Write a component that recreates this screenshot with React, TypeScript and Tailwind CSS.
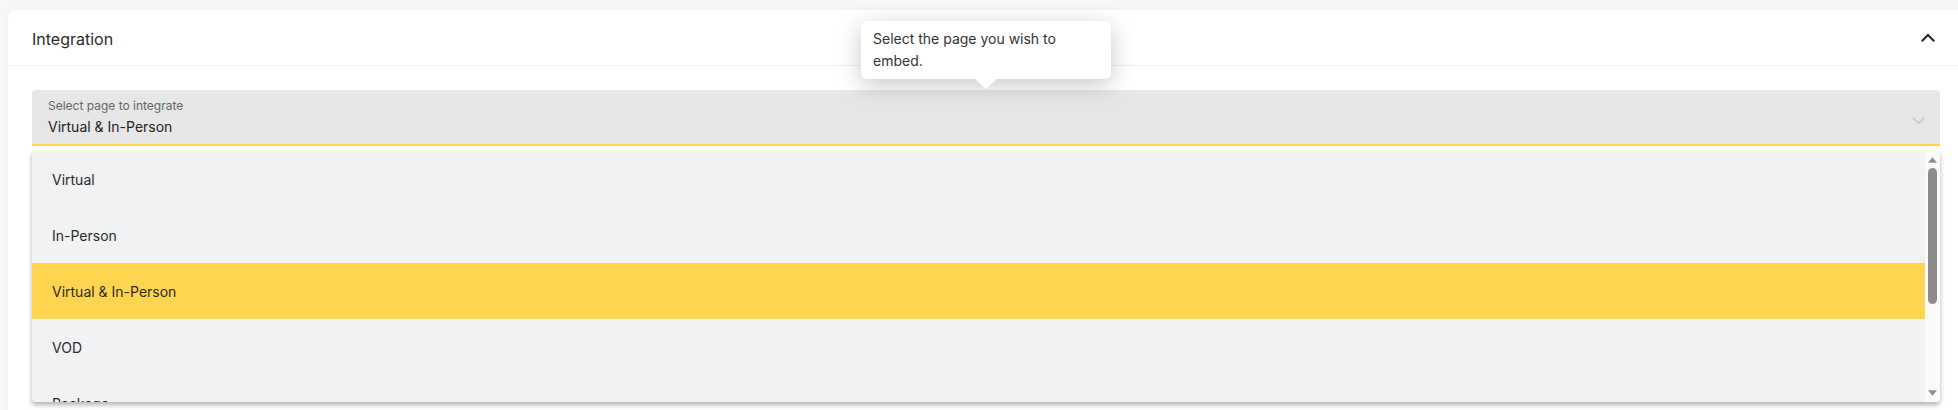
import React from 'react';

const options = ['Virtual', 'In-Person', 'Virtual & In-Person', 'VOD', 'Package'];
const selected = 'Virtual & In-Person';

const ChevronUp: React.FC<{ className?: string }> = ({ className }) => (
  <svg viewBox="0 0 16 16" fill="none" className={className} xmlns="http://www.w3.org/2000/svg">
    <path d="M2.5 10.5L8 5L13.5 10.5" stroke="currentColor" strokeWidth="2" strokeLinecap="square" />
  </svg>
);

const ChevronDown: React.FC<{ className?: string }> = ({ className }) => (
  <svg viewBox="0 0 16 16" fill="none" className={className} xmlns="http://www.w3.org/2000/svg">
    <path d="M2.5 5.5L8 11L13.5 5.5" stroke="currentColor" strokeWidth="2" strokeLinecap="round" strokeLinejoin="round" />
  </svg>
);

const Scrollbar: React.FC = () => (
  <div className="w-[15px] shrink-0 bg-[#fafafa] flex flex-col items-center">
    <svg viewBox="0 0 10 6" className="w-[9px] h-[6px] mt-[6px]" xmlns="http://www.w3.org/2000/svg">
      <path d="M5 0L10 6H0Z" fill="#8f8f8f" />
    </svg>
    <div className="w-[9px] h-[136px] mt-[5px] rounded-full bg-[#8c8c8c]" />
    <div className="flex-1" />
    <svg viewBox="0 0 10 6" className="w-[9px] h-[6px] mb-[6px]" xmlns="http://www.w3.org/2000/svg">
      <path d="M0 0H10L5 6Z" fill="#8f8f8f" />
    </svg>
  </div>
);

export default function App() {
  return (
    <div
      className="w-[1958px] h-[410px] overflow-hidden bg-[#f7f7f7] pl-2 pt-[10px] relative"
      style={{ fontFamily: 'Inter, "Noto Sans", sans-serif' }}
    >
      <div className="w-[1956px] h-[420px] bg-white rounded-lg shadow-[0_0_6px_rgba(0,0,0,0.04)]">
        {/* header */}
        <div className="h-[56px] flex items-center justify-between px-6 border-b border-[#f0f0f0]">
          <span className="text-[16px] text-[#2b2b2b] mt-[2px]">Integration</span>
          <ChevronUp className="w-4 h-4 text-[#222] mr-[4px]" />
        </div>

        {/* body */}
        <div className="px-6 pt-6 relative">
          <div className="h-[56px] bg-[#e7e7e7] rounded-t border-b-2 border-[#ffd54f] flex items-center justify-between pl-4 pr-[14px]">
            <div className="flex flex-col">
              <span className="text-[12px] leading-[16px] text-[#666]">Select page to integrate</span>
              <span className="text-[14px] leading-[20px] text-[#222] mt-[3px]">{selected}</span>
            </div>
            <ChevronDown className="w-[15px] h-[15px] text-[#c6cad2] mt-[6px]" />
          </div>

          {/* dropdown list */}
          <div className="mt-[5px] h-[251px] bg-[#f1f2f4] rounded-b shadow-[0_3px_5px_rgba(0,0,0,0.3)] flex overflow-hidden">
            <div className="flex-1 overflow-hidden">
              {options.map((o) => (
                <div
                  key={o}
                  className={`h-[56px] flex items-center pl-5 text-[14px] text-[#2a2a2a] ${
                    o === selected ? 'bg-[#ffd54f]' : ''
                  }`}
                >
                  {o}
                </div>
              ))}
            </div>
            <Scrollbar />
          </div>
        </div>
      </div>

      {/* tooltip */}
      <div className="absolute left-[861px] top-[21px] w-[250px] bg-white rounded-md shadow-[0_6px_24px_rgba(0,0,0,0.22)] px-3 py-[7px] text-[14px] leading-[22px] text-[#333]">
        Select the page you wish to
        <br />
        embed.
        <div className="absolute left-[114px] -bottom-[10px] w-0 h-0 border-l-[11px] border-r-[11px] border-t-[10px] border-l-transparent border-r-transparent border-t-white" />
      </div>
    </div>
  );
}
